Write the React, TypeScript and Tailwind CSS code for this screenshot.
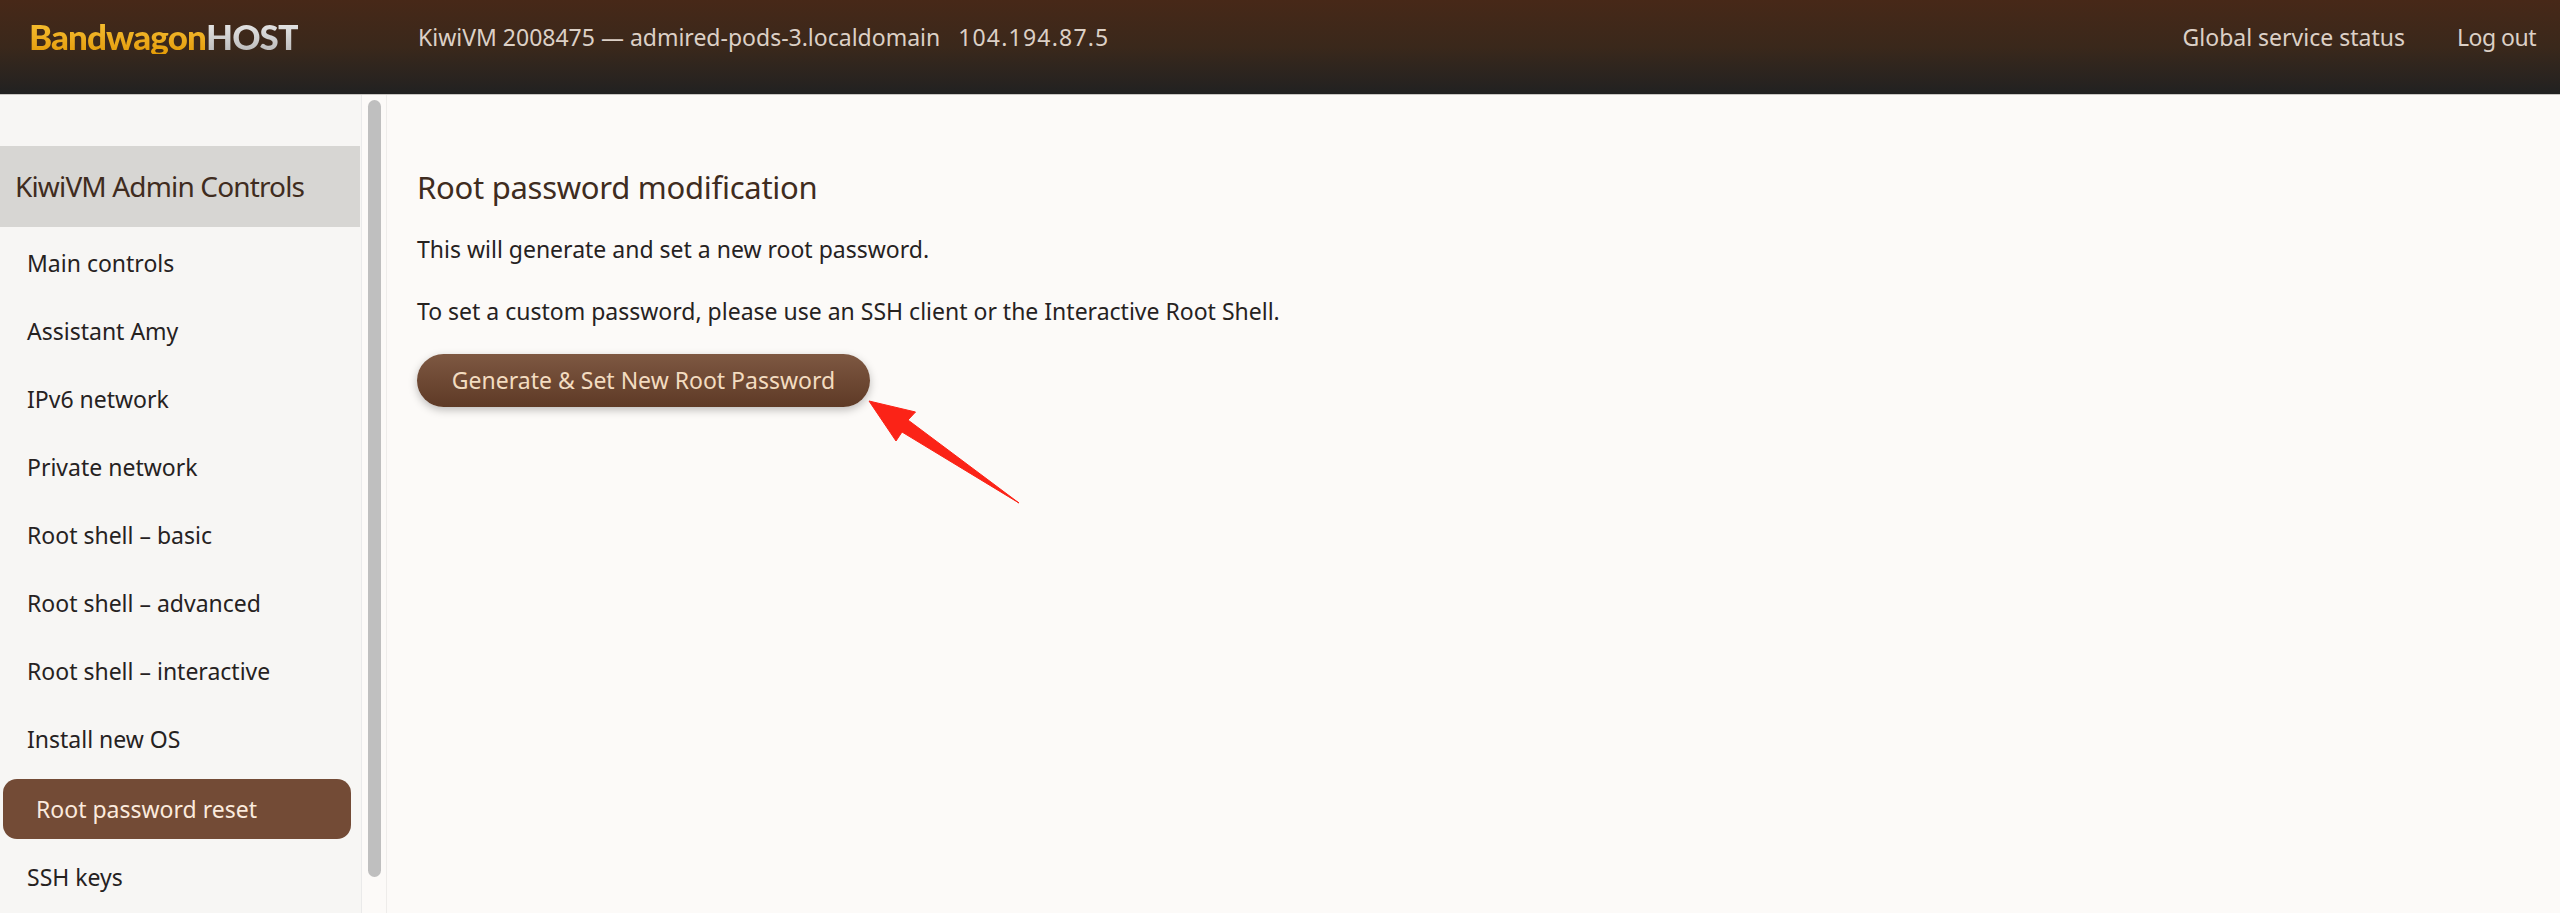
const items = [
  "Main controls",
  "Assistant Amy",
  "IPv6 network",
  "Private network",
  "Root shell – basic",
  "Root shell – advanced",
  "Root shell – interactive",
  "Install new OS",
  "Root password reset",
  "SSH keys",
];

function Arrow() {
  return (
    <svg className="absolute left-[860px] top-[395px]" width="170" height="115" viewBox="860 395 170 115">
      <polygon points="869,401 915.5,412 908,420 1019,503 902,432 896,441" fill="#fb2317" stroke="#fb2317" strokeWidth="1" strokeLinejoin="round" />
    </svg>
  );
}

export default function App() {
  return (
    <div className="relative flex h-[913px] w-full flex-col overflow-hidden bg-[#fcfaf8] font-['Noto_Sans',sans-serif] text-[23px] text-[#26221f]">
      <header className="flex h-[95px] shrink-0 items-start border-b border-[#c9c6c2] bg-gradient-to-b from-[#472818] via-[#3a281b] to-[#212121] pt-[18px] text-[#dcd0c6]">
        <div className="ml-[29px] flex w-[389px] items-baseline font-['Lato',sans-serif] text-[35px] leading-[36px] font-black tracking-[-0.9px]">
          <span className="bg-gradient-to-b from-[#f7c233] to-[#e49c06] bg-clip-text text-transparent">Bandwagon</span>
          <span className="bg-gradient-to-b from-[#ececec] to-[#b9b9b9] bg-clip-text text-transparent">HOST</span>
        </div>
        <div className="leading-[38px]">
          KiwiVM 2008475 — admired-pods-3.localdomain&nbsp;&nbsp;&nbsp;<span className="tracking-[1.2px]">104.194.87.5</span>
        </div>
        <nav className="mr-[24px] ml-auto flex gap-[52px] leading-[38px]">
          <span>Global service status</span>
          <span className="tracking-[-0.5px]">Log out</span>
        </nav>
      </header>
      <div className="flex min-h-0 flex-1">
        <aside className="w-[362px] shrink-0 border-r border-[#eaeaea] bg-[#f7f6f4] pt-[51px]">
          <div className="flex h-[81px] w-[360px] items-center bg-[#d7d6d3] pb-[2px] pl-[15px] text-[28px] tracking-[-0.85px] text-[#3f2c20]">KiwiVM Admin Controls</div>
          <ul className="mt-[2px] flex flex-col">
            {items.map((t) =>
              t === "Root password reset" ? (
                <li key={t} className="mx-[3px] mt-[6px] mb-[4px] flex h-[60px] w-[348px] items-center rounded-[14px] bg-[#734b36] pl-[33px] text-[#fbeadd]">{t}</li>
              ) : (
                <li key={t} className="flex h-[68px] items-center pl-[27px]">{t}</li>
              ),
            )}
          </ul>
        </aside>
        <div className="w-[25px] shrink-0 border-r border-[#eeecea] pt-[5px] pl-[6px]">
          <div className="h-[777px] w-[13px] rounded-full bg-[#bfbfbf]" />
        </div>
        <main className="flex-1 pt-[70px] pl-[30px]">
          <h1 className="text-[31px] leading-[44px] tracking-[-0.27px] text-[#3f2c20]">Root password modification</h1>
          <p className="mt-[20px] leading-[40px]">This will generate and set a new root password.</p>
          <p className="mt-[22px] leading-[40px]">To set a custom password, please use an SSH client or the Interactive Root Shell.</p>
          <button className="mt-[23px] flex h-[53px] w-[453px] items-center justify-center rounded-full bg-gradient-to-b from-[#7e5842] to-[#5e3a26] text-[#f3dcc0] shadow-[0_3px_8px_rgba(0,0,0,0.25)]">Generate &amp; Set New Root Password</button>
        </main>
      </div>
      <Arrow />
    </div>
  );
}
